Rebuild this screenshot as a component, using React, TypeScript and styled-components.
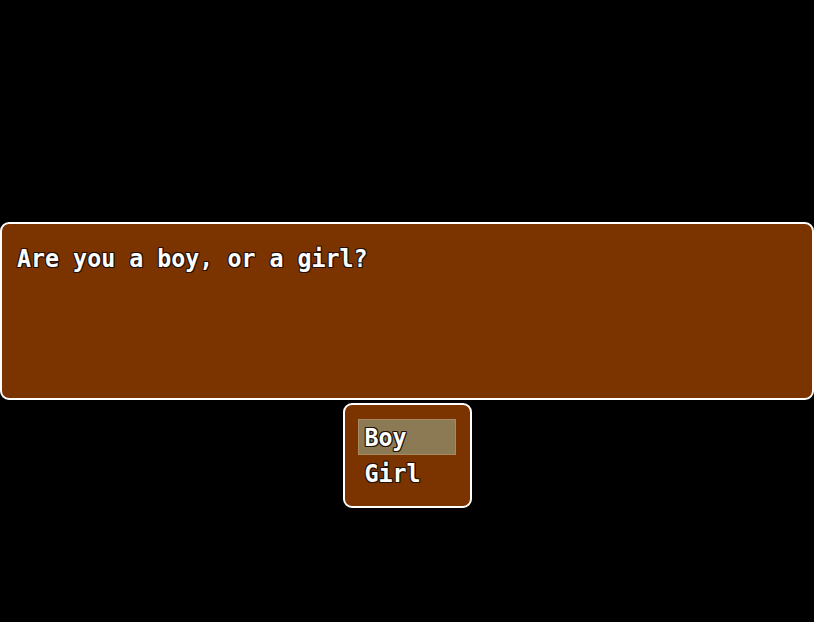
import React from 'react';
import styled, { createGlobalStyle } from 'styled-components';

const GlobalStyle = createGlobalStyle`
    html, body {
        margin: 0;
        padding: 0;
        background: #000;
    }
    #root {
        width: 814px;
        height: 622px;
    }
`;

const outline = `
    -1px -1px 0 #241208, 1px -1px 0 #241208, -1px 1px 0 #241208, 1px 1px 0 #241208,
    0 -1px 0 #241208, 0 1px 0 #241208, -1px 0 0 #241208, 1px 0 0 #241208
`;

const Screen = styled.div`
    width: 814px;
    height: 622px;
    background: #000;
    display: flex;
    flex-direction: column;
    align-items: center;
    padding-top: 222px;
    box-sizing: border-box;
    font-family: "DejaVu Sans Mono", "Liberation Mono", monospace;
    color: #fff;
`;

const MessageWindow = styled.div`
    width: 814px;
    height: 178px;
    box-sizing: border-box;
    background: #7b3300;
    border: 2.5px solid #fff;
    border-radius: 9px;
    padding: 16px 0 0 15px;
`;

const Line = styled.div`
    font-size: 23.3px;
    font-weight: bold;
    line-height: 36px;
    text-shadow: ${outline};
    transform: scaleY(1.08);
    transform-origin: left center;
`;

const ChoiceWindow = styled.div`
    margin-top: 3px;
    width: 129px;
    height: 105px;
    box-sizing: border-box;
    background: #7b3300;
    border: 2.5px solid #fff;
    border-radius: 9px;
    padding: 14px 14px 0 13px;
    display: flex;
    flex-direction: column;
`;

const Choice = styled.div<{ $selected?: boolean }>`
    height: 36px;
    box-sizing: border-box;
    padding-left: 6px;
    font-size: 23.3px;
    font-weight: bold;
    line-height: 36px;
    text-shadow: ${outline};
    background: ${(p) => (p.$selected ? '#8c7a55' : 'transparent')};
    border: 1px solid ${(p) => (p.$selected ? '#a88a62' : 'transparent')};
    display: flex;
    align-items: center;
`;

const ChoiceLabel = styled.span`
    display: inline-block;
    transform: scaleY(1.08);
`;

export default function App() {
    return (
        <>
            <GlobalStyle />
            <Screen>
                <MessageWindow>
                    <Line>Are you a boy, or a girl?</Line>
                </MessageWindow>
                <ChoiceWindow>
                    <Choice $selected><ChoiceLabel>Boy</ChoiceLabel></Choice>
                    <Choice><ChoiceLabel>Girl</ChoiceLabel></Choice>
                </ChoiceWindow>
            </Screen>
        </>
    );
}
